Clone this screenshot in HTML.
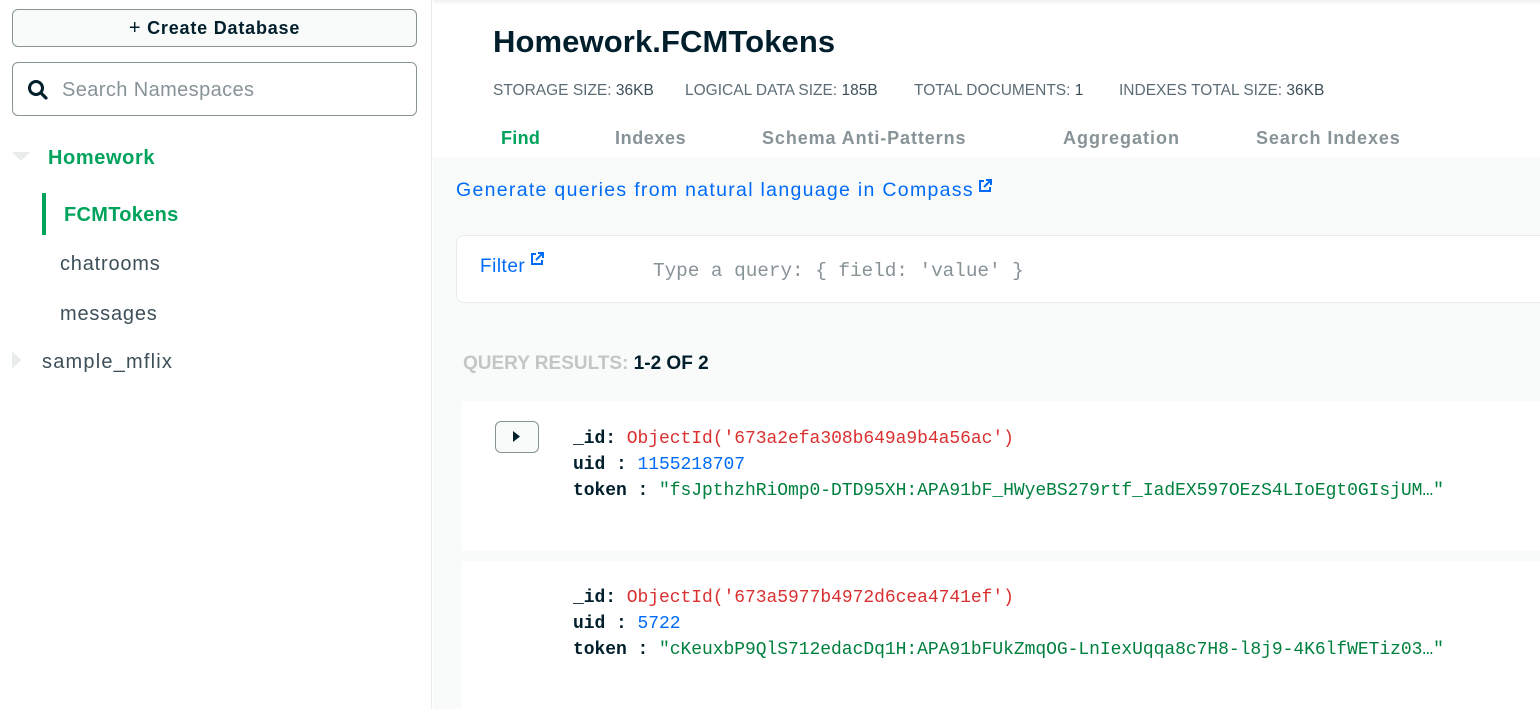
<!DOCTYPE html>
<html><head><meta charset="utf-8"><style>
*{margin:0;padding:0;box-sizing:border-box}
body{width:1540px;height:709px;overflow:hidden;background:#fff;font-family:"Liberation Sans",sans-serif;position:relative}
.a{position:absolute;white-space:nowrap}
.m{font-family:"Liberation Mono",monospace;font-size:18px;letter-spacing:-0.05px}
.m b{font-weight:bold}
</style></head><body>
<div class="a" style="left:0;top:0;width:432px;height:709px;background:#fff;border-right:1px solid #e8edeb"></div>
<div class="a" style="left:12px;top:9px;width:405px;height:38px;border:1px solid #889397;border-radius:6px;background:#f9fbfa;text-align:center;line-height:36px;font-size:18px;font-weight:bold;color:#001e2b;letter-spacing:0.8px"><span style="font-weight:normal;font-size:20px">+</span> Create Database</div>
<div class="a" style="left:12px;top:62px;width:405px;height:54px;border:1px solid #889397;border-radius:6px;background:#fff"></div>
<svg class="a" style="left:27px;top:79px" width="22" height="22" viewBox="0 0 22 22"><circle cx="9" cy="9" r="6.5" fill="none" stroke="#001e2b" stroke-width="3"/><path d="M14 14l5 5" stroke="#001e2b" stroke-width="3.2" stroke-linecap="round"/></svg>
<div class="a" style="left:62px;top:79px;font-size:20px;color:#889397;letter-spacing:0.4px">Search Namespaces</div>
<svg class="a" style="left:12px;top:152px" width="18" height="10"><path d="M0 0h18l-9 9z" fill="#e8edeb"/></svg>
<div class="a" style="left:48px;top:147px;font-size:20px;font-weight:bold;color:#00a35c;letter-spacing:0.6px">Homework</div>
<div class="a" style="left:42px;top:193px;width:4px;height:42px;background:#00a35c"></div>
<div class="a" style="left:64px;top:204px;font-size:20px;font-weight:bold;color:#00a35c;letter-spacing:0.3px">FCMTokens</div>
<div class="a" style="left:60px;top:253px;font-size:20px;color:#3d4f58;letter-spacing:0.8px">chatrooms</div>
<div class="a" style="left:60px;top:303px;font-size:20px;color:#3d4f58;letter-spacing:0.8px">messages</div>
<svg class="a" style="left:12px;top:351px" width="10" height="18"><path d="M0 0v18l9-9z" fill="#e8edeb"/></svg>
<div class="a" style="left:42px;top:351px;font-size:20px;color:#3d4f58;letter-spacing:1.2px">sample_mflix</div>
<div class="a" style="left:433px;top:0;width:1107px;height:5px;background:linear-gradient(#f0f2f1,#fff)"></div>
<div class="a" style="left:433px;top:157px;width:1107px;height:552px;background:#f9fbfa"></div>
<div class="a" style="left:493px;top:24px;font-size:31px;font-weight:bold;color:#001e2b;letter-spacing:0.1px">Homework.FCMTokens</div>
<div class="a" style="left:493px;top:82px;font-size:15.5px;color:#5c6c75;letter-spacing:0px">STORAGE SIZE: <span style="color:#3d4f58">36KB</span></div>
<div class="a" style="left:685px;top:82px;font-size:15.5px;color:#5c6c75;letter-spacing:0px">LOGICAL DATA SIZE: <span style="color:#3d4f58">185B</span></div>
<div class="a" style="left:914px;top:82px;font-size:15.5px;color:#5c6c75;letter-spacing:0px">TOTAL DOCUMENTS: <span style="color:#3d4f58">1</span></div>
<div class="a" style="left:1119px;top:82px;font-size:15.5px;color:#5c6c75;letter-spacing:0px">INDEXES TOTAL SIZE: <span style="color:#3d4f58">36KB</span></div>
<div class="a" style="left:501px;top:128px;font-size:18px;font-weight:bold;color:#00a35c;letter-spacing:0.3px">Find</div>
<div class="a" style="left:615px;top:128px;font-size:18px;font-weight:bold;color:#889397;letter-spacing:0.6px">Indexes</div>
<div class="a" style="left:762px;top:128px;font-size:18px;font-weight:bold;color:#889397;letter-spacing:0.9px">Schema Anti-Patterns</div>
<div class="a" style="left:1063px;top:128px;font-size:18px;font-weight:bold;color:#889397;letter-spacing:1px">Aggregation</div>
<div class="a" style="left:1256px;top:128px;font-size:18px;font-weight:bold;color:#889397;letter-spacing:0.9px">Search Indexes</div>
<div class="a" style="left:456px;top:179px;font-size:19.5px;color:#016bf8;letter-spacing:1.3px">Generate queries from natural language in Compass</div>
<svg class="a" style="left:978px;top:179px" width="14" height="14" viewBox="0 0 14 14"><path d="M6 2H2v10h10V8" fill="none" stroke="#016bf8" stroke-width="2"/><path d="M8 1h5v5M13 1L6 8" fill="none" stroke="#016bf8" stroke-width="2"/></svg>
<div class="a" style="left:456px;top:235px;width:1100px;height:68px;background:#fff;border:1px solid #e8edeb;border-radius:8px"></div>
<div class="a" style="left:480px;top:256px;font-size:19px;color:#016bf8;letter-spacing:0.5px">Filter</div>
<svg class="a" style="left:530px;top:252px" width="14" height="14" viewBox="0 0 14 14"><path d="M6 2H2v10h10V8" fill="none" stroke="#016bf8" stroke-width="2"/><path d="M8 1h5v5M13 1L6 8" fill="none" stroke="#016bf8" stroke-width="2"/></svg>
<div class="a m" style="left:653px;top:260px;font-size:19.4px;color:#889397">Type a query: { field: 'value' }</div>
<div class="a" style="left:463px;top:353px;font-size:19px;font-weight:bold;color:#c1c7c6;letter-spacing:0px">QUERY RESULTS: <span style="color:#001e2b">1-2 OF 2</span></div>
<div class="a" style="left:462px;top:401px;width:1078px;height:150px;background:#fff"></div>
<div class="a" style="left:462px;top:561px;width:1078px;height:148px;background:#fff"></div>
<div class="a" style="left:495px;top:421px;width:44px;height:32px;border:1px solid #889397;border-radius:6px;background:#f9fbfa"></div>
<svg class="a" style="left:513px;top:431px" width="8" height="11"><path d="M0 0v11l7-5.5z" fill="#001e2b"/></svg>
<div class="a m" style="left:573px;top:429px;color:#001e2b"><b>_id:</b> <span style="color:#db3030">ObjectId('673a2efa308b649a9b4a56ac')</span></div>
<div class="a m" style="left:573px;top:455px;color:#001e2b"><b>uid :</b> <span style="color:#016bf8">1155218707</span></div>
<div class="a m" style="left:573px;top:481px;color:#001e2b"><b>token :</b> <span style="color:#00803f">"fsJpthzhRiOmp0-DTD95XH:APA91bF_HWyeBS279rtf_IadEX597OEzS4LIoEgt0GIsjUM…"</span></div>
<div class="a m" style="left:573px;top:588px;color:#001e2b"><b>_id:</b> <span style="color:#db3030">ObjectId('673a5977b4972d6cea4741ef')</span></div>
<div class="a m" style="left:573px;top:614px;color:#001e2b"><b>uid :</b> <span style="color:#016bf8">5722</span></div>
<div class="a m" style="left:573px;top:640px;color:#001e2b"><b>token :</b> <span style="color:#00803f">"cKeuxbP9QlS712edacDq1H:APA91bFUkZmqOG-LnIexUqqa8c7H8-l8j9-4K6lfWETiz03…"</span></div>
</body></html>
